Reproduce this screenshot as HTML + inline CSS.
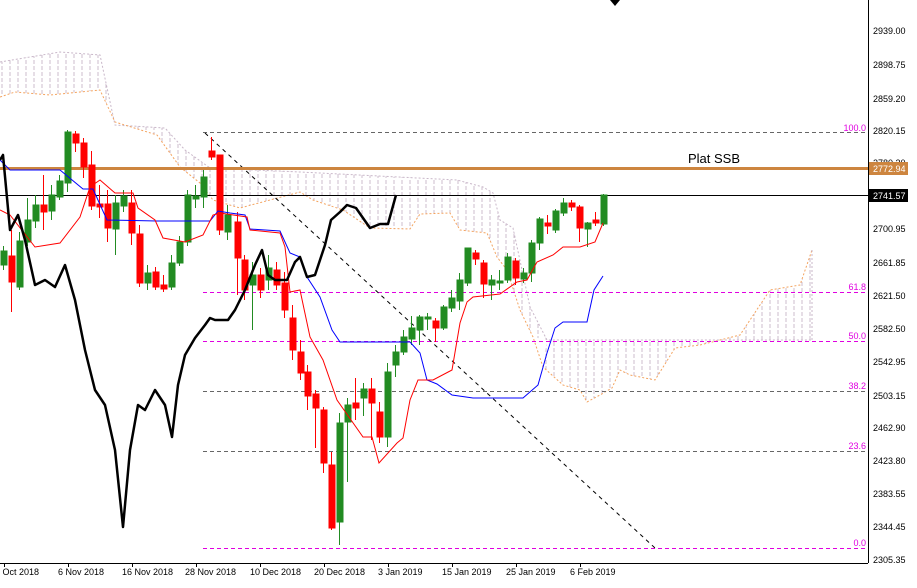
<!DOCTYPE html>
<html><head><meta charset="utf-8"><style>
html,body{margin:0;padding:0;background:#fff;}
svg{display:block;font-family:"Liberation Sans",sans-serif;}
</style></head><body>
<svg width="917" height="588" viewBox="0 0 917 588" xmlns="http://www.w3.org/2000/svg">
<defs>
<pattern id="h" width="8" height="6" patternUnits="userSpaceOnUse">
<line x1="2" y1="0" x2="2" y2="4" stroke="#cdbccd" stroke-width="1"/>
</pattern>
<clipPath id="pc"><rect x="0" y="0" width="868" height="563"/></clipPath>
</defs>
<rect width="917" height="588" fill="#fff"/>
<g clip-path="url(#pc)">
<polygon fill="url(#h)" points="0,62 60,52 100,55 115,125 165,128 185,150 210,168 300,172 457,180 483,187 493,193 500,220 513,228 530,307 547,340 533,337 520,310 507,270 497,257 487,233 460,230 450,213 420,214 410,229 370,228 343,210 313,200 300,192 240,208 213,200 200,183 180,167 157,135 115,122 100,90 50,95 15,92 0,97"/>
<polyline fill="none" stroke="#c9b7c9" stroke-dasharray="2,2" points="0,62 60,52 100,55 115,125 165,128 185,150 210,168 300,172 457,180 483,187 493,193 500,220 513,228 530,307 547,340 812,340"/>
<polygon fill="url(#h)" points="547,340 812,340 812,250 800,285 770,290 740,335 700,345 675,348 655,380 630,375 620,370 612,388 600,395 587,402 580,390 563,385 543,367"/>
<polyline fill="none" stroke="#f4a460" stroke-dasharray="2,2" points="0,97 15,92 50,95 100,90 115,122 157,135 180,167 200,183 213,200 240,208 300,192 313,200 343,210 370,228 410,229 420,214 450,213 460,230 487,233 497,257 507,270 520,310 533,337 543,367 563,385 580,390 587,402 600,395 612,388 620,370 630,375 655,380 675,348 700,345 740,335 770,290 800,285 812,250"/>
<line x1="812" y1="250" x2="812" y2="340" stroke="#c9b7c9" stroke-dasharray="2,2"/>
<g stroke="#e000e0" stroke-dasharray="4,3" stroke-width="1">
<line x1="203" y1="132.5" x2="868" y2="132.5" stroke="#666"/>
<line x1="203" y1="292.5" x2="868" y2="292.5"/>
<line x1="203" y1="341.5" x2="868" y2="341.5"/>
<line x1="203" y1="391.5" x2="868" y2="391.5" stroke="#666"/>
<line x1="203" y1="451.5" x2="868" y2="451.5" stroke="#666"/>
<line x1="203" y1="548.5" x2="868" y2="548.5"/>
</g>
<g fill="#e000e0" font-size="9" text-anchor="end">
<text x="866" y="131">100.0</text><text x="866" y="290">61.8</text><text x="866" y="339">50.0</text>
<text x="866" y="389">38.2</text><text x="866" y="449">23.6</text><text x="866" y="546">0.0</text>
</g>
<line x1="205" y1="133" x2="655" y2="548" stroke="#000" stroke-dasharray="4,4"/>
<line x1="0" y1="168.5" x2="868" y2="168.5" stroke="#cd853f" stroke-width="3"/>
<line x1="0" y1="195.5" x2="868" y2="195.5" stroke="#000"/>
<text x="688" y="163" font-size="13" fill="#000">Plat SSB</text>
<g stroke-width="1">
<g stroke="#228b22" fill="#228b22">
<line x1="3.5" y1="246" x2="3.5" y2="270"/><rect x="1" y="251" width="6" height="14"/>
<line x1="19.5" y1="232" x2="19.5" y2="290"/><rect x="17" y="241" width="6" height="46"/>
<line x1="27.5" y1="198" x2="27.5" y2="246"/><rect x="25" y="220" width="6" height="22"/>
<line x1="35.5" y1="195" x2="35.5" y2="228"/><rect x="33" y="205" width="6" height="16"/>
<line x1="51.5" y1="185" x2="51.5" y2="220"/><rect x="49" y="195" width="6" height="16"/>
<line x1="59.5" y1="175" x2="59.5" y2="200"/><rect x="57" y="181" width="6" height="16"/>
<line x1="67.5" y1="130" x2="67.5" y2="192"/><rect x="65" y="132" width="6" height="51"/>
<line x1="115.5" y1="195" x2="115.5" y2="255"/><rect x="113" y="203" width="6" height="26"/>
<line x1="123.5" y1="190" x2="123.5" y2="212"/><rect x="121" y="196" width="6" height="10"/>
<line x1="147.5" y1="265" x2="147.5" y2="290"/><rect x="145" y="273" width="6" height="10"/>
<line x1="171.5" y1="255" x2="171.5" y2="290"/><rect x="169" y="263" width="6" height="24"/>
<line x1="179.5" y1="236" x2="179.5" y2="266"/><rect x="177" y="242" width="6" height="21"/>
<line x1="187.5" y1="190" x2="187.5" y2="246"/><rect x="185" y="195" width="6" height="47"/>
<line x1="195.5" y1="185" x2="195.5" y2="208"/><rect x="193" y="196" width="6" height="3"/>
<line x1="203.5" y1="170" x2="203.5" y2="208"/><rect x="201" y="177" width="6" height="20"/>
<line x1="227.5" y1="205" x2="227.5" y2="240"/><rect x="225" y="215" width="6" height="17"/>
<line x1="252.5" y1="262" x2="252.5" y2="330"/><rect x="250" y="275" width="6" height="10"/>
<line x1="268.5" y1="255" x2="268.5" y2="290"/><rect x="266" y="268" width="6" height="12"/>
<line x1="339.5" y1="413" x2="339.5" y2="545"/><rect x="337" y="423" width="6" height="99"/>
<line x1="347.5" y1="398" x2="347.5" y2="482"/><rect x="345" y="405" width="6" height="17"/>
<line x1="363.5" y1="383" x2="363.5" y2="416"/><rect x="361" y="389" width="6" height="9"/>
<line x1="387.5" y1="363" x2="387.5" y2="447"/><rect x="385" y="372" width="6" height="65"/>
<line x1="395.5" y1="345" x2="395.5" y2="377"/><rect x="393" y="352" width="6" height="13"/>
<line x1="403.5" y1="330" x2="403.5" y2="355"/><rect x="401" y="337" width="6" height="15"/>
<line x1="411.5" y1="316" x2="411.5" y2="345"/><rect x="409" y="328" width="6" height="11"/>
<line x1="419.5" y1="315" x2="419.5" y2="345"/><rect x="417" y="317" width="6" height="13"/>
<line x1="427.5" y1="313" x2="427.5" y2="330"/><rect x="425" y="317" width="6" height="2"/>
<line x1="443.5" y1="305" x2="443.5" y2="330"/><rect x="441" y="307" width="6" height="21"/>
<line x1="451.5" y1="290" x2="451.5" y2="312"/><rect x="449" y="298" width="6" height="10"/>
<line x1="459.5" y1="273" x2="459.5" y2="310"/><rect x="457" y="280" width="6" height="21"/>
<line x1="467.5" y1="248" x2="467.5" y2="286"/><rect x="465" y="248" width="6" height="35"/>
<line x1="491.5" y1="275" x2="491.5" y2="300"/><rect x="489" y="280" width="6" height="5"/>
<line x1="499.5" y1="270" x2="499.5" y2="290"/><rect x="497" y="281" width="6" height="2"/>
<line x1="507.5" y1="253" x2="507.5" y2="283"/><rect x="505" y="257" width="6" height="23"/>
<line x1="523.5" y1="268" x2="523.5" y2="283"/><rect x="521" y="273" width="6" height="6"/>
<line x1="531.5" y1="240" x2="531.5" y2="282"/><rect x="529" y="243" width="6" height="30"/>
<line x1="539.5" y1="217" x2="539.5" y2="250"/><rect x="537" y="219" width="6" height="24"/>
<line x1="555.5" y1="209" x2="555.5" y2="233"/><rect x="553" y="211" width="6" height="19"/>
<line x1="563.5" y1="198" x2="563.5" y2="216"/><rect x="561" y="203" width="6" height="10"/>
<line x1="587.5" y1="222" x2="587.5" y2="247"/><rect x="585" y="223" width="6" height="6"/>
<line x1="603.5" y1="194" x2="603.5" y2="226"/><rect x="601" y="195" width="6" height="29"/>
</g>
<g stroke="#ff0000" fill="#ff0000">
<line x1="11.5" y1="230" x2="11.5" y2="312"/><rect x="9" y="256" width="6" height="26"/>
<line x1="43.5" y1="175" x2="43.5" y2="230"/><rect x="41" y="205" width="6" height="7"/>
<line x1="75.5" y1="131" x2="75.5" y2="152"/><rect x="73" y="134" width="6" height="9"/>
<line x1="83.5" y1="138" x2="83.5" y2="178"/><rect x="81" y="143" width="6" height="24"/>
<line x1="91.5" y1="151" x2="91.5" y2="210"/><rect x="89" y="165" width="6" height="41"/>
<line x1="99.5" y1="185" x2="99.5" y2="218"/><rect x="97" y="204" width="6" height="3"/>
<line x1="107.5" y1="190" x2="107.5" y2="242"/><rect x="105" y="204" width="6" height="24"/>
<line x1="131.5" y1="190" x2="131.5" y2="245"/><rect x="129" y="203" width="6" height="30"/>
<line x1="139.5" y1="225" x2="139.5" y2="287"/><rect x="137" y="234" width="6" height="49"/>
<line x1="155.5" y1="267" x2="155.5" y2="290"/><rect x="153" y="272" width="6" height="15"/>
<line x1="163.5" y1="275" x2="163.5" y2="292"/><rect x="161" y="285" width="6" height="4"/>
<line x1="211.5" y1="137" x2="211.5" y2="160"/><rect x="209" y="151" width="6" height="6"/>
<line x1="219.5" y1="155" x2="219.5" y2="235"/><rect x="217" y="155" width="6" height="75"/>
<line x1="237.5" y1="212" x2="237.5" y2="295"/><rect x="235" y="222" width="6" height="36"/>
<line x1="244.5" y1="255" x2="244.5" y2="300"/><rect x="242" y="260" width="6" height="30"/>
<line x1="260.5" y1="268" x2="260.5" y2="298"/><rect x="258" y="275" width="6" height="15"/>
<line x1="276.5" y1="262" x2="276.5" y2="290"/><rect x="274" y="270" width="6" height="15"/>
<line x1="284.5" y1="272" x2="284.5" y2="318"/><rect x="282" y="283" width="6" height="27"/>
<line x1="292.5" y1="305" x2="292.5" y2="360"/><rect x="290" y="318" width="6" height="32"/>
<line x1="300.5" y1="340" x2="300.5" y2="380"/><rect x="298" y="352" width="6" height="21"/>
<line x1="307.5" y1="365" x2="307.5" y2="410"/><rect x="305" y="372" width="6" height="24"/>
<line x1="315.5" y1="390" x2="315.5" y2="448"/><rect x="313" y="394" width="6" height="14"/>
<line x1="323.5" y1="407" x2="323.5" y2="473"/><rect x="321" y="410" width="6" height="53"/>
<line x1="331.5" y1="452" x2="331.5" y2="530"/><rect x="329" y="465" width="6" height="63"/>
<line x1="355.5" y1="378" x2="355.5" y2="420"/><rect x="353" y="403" width="6" height="5"/>
<line x1="371.5" y1="378" x2="371.5" y2="440"/><rect x="369" y="389" width="6" height="14"/>
<line x1="379.5" y1="402" x2="379.5" y2="443"/><rect x="377" y="412" width="6" height="25"/>
<line x1="435.5" y1="318" x2="435.5" y2="342"/><rect x="433" y="321" width="6" height="7"/>
<line x1="475.5" y1="250" x2="475.5" y2="265"/><rect x="473" y="253" width="6" height="6"/>
<line x1="483.5" y1="260" x2="483.5" y2="298"/><rect x="481" y="263" width="6" height="21"/>
<line x1="515.5" y1="258" x2="515.5" y2="285"/><rect x="513" y="261" width="6" height="17"/>
<line x1="547.5" y1="215" x2="547.5" y2="234"/><rect x="545" y="223" width="6" height="3"/>
<line x1="571.5" y1="200" x2="571.5" y2="211"/><rect x="569" y="203" width="6" height="4"/>
<line x1="579.5" y1="205" x2="579.5" y2="242"/><rect x="577" y="207" width="6" height="21"/>
<line x1="595.5" y1="212" x2="595.5" y2="226"/><rect x="593" y="220" width="6" height="3"/>
</g>
</g>
<polyline fill="none" stroke="#0000ff" points="0,160 10,170 60,170 83,189 93,189 107,220 157,221 210,221 218,211 230,213 245,215 250,229 280,231 290,253 300,257 307,277 320,297 332,330 340,342 410,342 420,353 427,380 437,384 452,395 473,398 523,398 538,385 547,353 555,328 563,322 587,322 594,290 603,276"/>
<polyline fill="none" stroke="#ff0000" points="0,210 10,215 35,247 60,243 80,217 90,187 100,180 115,193 133,193 138,208 155,220 163,238 185,242 203,235 213,215 220,213 247,217 250,230 280,233 285,247 290,292 300,290 310,337 323,360 337,400 363,437 372,437 379,463 397,443 403,438 410,400 418,380 433,380 452,370 460,323 467,302 473,297 500,294 517,282 527,280 537,262 553,255 563,247 580,247 595,242 603,223"/>
<polyline fill="none" stroke="#000" stroke-width="2.5" stroke-linejoin="round" points="0,160 3,155 10,230 18,215 25,240 35,285 45,280 55,287 65,265 75,300 85,350 95,390 105,405 115,450 123,527 130,450 138,405 145,410 155,390 165,405 172,437 178,385 185,355 195,338 205,325 210,318 215,320 228,320 235,310 245,290 255,265 262,250 268,275 275,280 287,280 295,262 300,257 307,277 315,275 325,245 331,220 340,212 347,205 356,208 370,228 380,224 388,224 396,195"/>
</g>
<line x1="868.5" y1="0" x2="868.5" y2="563" stroke="#000"/>
<line x1="0" y1="563.5" x2="868" y2="563.5" stroke="#000"/>
<polygon points="610,0 620,0 615,6" fill="#000"/>
<g font-size="9" fill="#000">
<text x="873" y="34">2939.00</text><text x="873" y="68">2898.75</text><text x="873" y="102">2859.20</text>
<text x="873" y="134">2820.15</text><text x="873" y="166">2780.30</text>
<text x="873" y="232">2700.95</text><text x="873" y="266">2661.85</text><text x="873" y="299">2621.50</text>
<text x="873" y="332">2582.50</text><text x="873" y="365">2542.95</text><text x="873" y="399">2503.15</text>
<text x="873" y="431">2462.90</text><text x="873" y="464">2423.80</text><text x="873" y="497">2383.55</text>
<text x="873" y="530">2344.45</text><text x="873" y="563">2305.35</text>
</g>
<rect x="869" y="162" width="39" height="13" fill="#cd853f"/>
<text x="873" y="172" font-size="9" fill="#fff">2772.94</text>
<rect x="869" y="189" width="39" height="13" fill="#000"/>
<text x="873" y="199" font-size="9" fill="#fff">2741.57</text>
<g font-size="9" fill="#000">
<text x="-5" y="575">6 Oct 2018</text><text x="58" y="575">6 Nov 2018</text><text x="122" y="575">16 Nov 2018</text>
<text x="185" y="575">28 Nov 2018</text><text x="250" y="575">10 Dec 2018</text><text x="314" y="575">20 Dec 2018</text>
<text x="378" y="575">3 Jan 2019</text><text x="442" y="575">15 Jan 2019</text><text x="506" y="575">25 Jan 2019</text>
<text x="570" y="575">6 Feb 2019</text>
</g>
<g stroke="#000"><line x1="4.5" y1="563" x2="4.5" y2="567"/><line x1="68.5" y1="563" x2="68.5" y2="567"/><line x1="132.5" y1="563" x2="132.5" y2="567"/><line x1="196.5" y1="563" x2="196.5" y2="567"/><line x1="260.5" y1="563" x2="260.5" y2="567"/><line x1="324.5" y1="563" x2="324.5" y2="567"/><line x1="388.5" y1="563" x2="388.5" y2="567"/><line x1="452.5" y1="563" x2="452.5" y2="567"/><line x1="516.5" y1="563" x2="516.5" y2="567"/><line x1="580.5" y1="563" x2="580.5" y2="567"/></g>
</svg>
</body></html>
